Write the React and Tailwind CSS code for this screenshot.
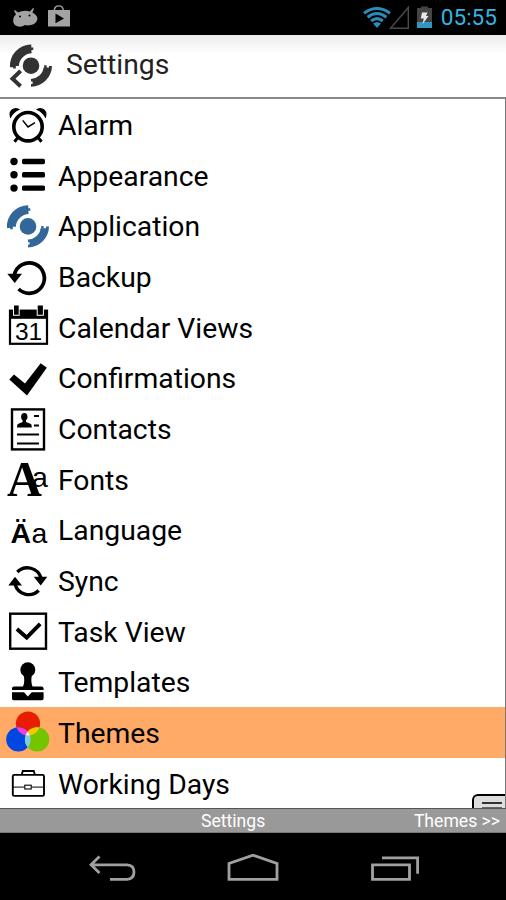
import { useState } from "react";

const Logo = ({ color }) => (
    <g fill={color}>
        <circle cx="28" cy="25.4" r="8.3" />
        <path d="M7 27 A21 21 0 0 1 28.3 4.3 V7.2 H30.3 V9.8 H28.5 V13 H30 A13.5 13.5 0 0 0 15.8 25.8 H12.8 V28.3 H10.2 V27 Z" />
        <path d="M49 25.6 A21 21 0 0 1 28 46.4 V43.6 H29.6 V41.2 H28 V38.6 A13 13 0 0 0 40.6 27.2 H41.2 V25 H43.6 V27.2 H46 V25.6 Z" />
    </g>
)

const icons = {
    alarm: (
        <g fill="none" stroke="#000">
            <path d="M10.6 17 C8.5 11 14 7 18.8 9.5 C15.5 11 12.5 13.5 10.6 17 Z M45.4 17 C47.5 11 42 7 37.2 9.5 C40.5 11 43.5 13.5 45.4 17 Z" fill="#000" strokeWidth="1.2" />
            <circle cx="28" cy="26.7" r="14.2" strokeWidth="3.6" />
            <path d="M22.7 20.4 L28 27 L35 22.6" strokeWidth="1.5" />
            <path d="M18 37.5 L14.5 41.8 M38 37.5 L41.5 41.8" strokeWidth="3" />
        </g>
    ),
    appearance: (
        <g>
            <circle cx="14" cy="11.5" r="3.7" />
            <circle cx="14" cy="24.8" r="3.7" />
            <circle cx="14" cy="38.1" r="3.7" />
            <rect x="22" y="8.8" width="23" height="5.4" rx="1.6" />
            <rect x="22" y="22.1" width="23" height="5.4" rx="1.6" />
            <rect x="22" y="35.4" width="23" height="5.4" rx="1.6" />
        </g>
    ),
    application: <Logo color="#336699" />,
    backup: (
        <g>
            <path d="M14.3 23 A15.2 15.2 0 1 1 18.6 37" fill="none" stroke="#000" strokeWidth="3.7" />
            <path d="M7.3 21.7 H22 L14.7 31 Z" />
        </g>
    ),
    calendar: (
        <g>
            <rect x="10" y="8.8" width="37" height="33" fill="#fff" stroke="#000" strokeWidth="2.2" />
            <rect x="9" y="7.8" width="39" height="9" />
            <path d="M13 7 H19.7 V13.8 H13 Z M36.7 7 H43.9 V13.8 H36.7 Z" fill="#fff" />
            <path d="M14 3.5 H18.7 V12.8 H14 Z M37.7 3.5 H42.9 V12.8 H37.7 Z" />
            <text x="15" y="38.5" fontSize="24.5" fontFamily="Liberation Sans, sans-serif">31</text>
        </g>
    ),
    check: <path d="M9.3 26.6 L14 21.6 L25 30.6 L40.7 10.2 L46.8 14.8 L27 42.4 Z" />,
    contacts: (
        <g>
            <rect x="12" y="5.4" width="32" height="40" fill="none" stroke="#000" strokeWidth="2.4" />
            <ellipse cx="24.3" cy="12.8" rx="3.2" ry="3.8" />
            <path d="M22.6 15 H26 V18 L31 20 Q31.8 21 31.8 23.4 H17 Q17 21 17.8 20 L22.6 18 Z" />
            <path d="M34 12 H39 M34 21.4 H39 M17 30.4 H39 M17 39.4 H39" stroke="#000" strokeWidth="2" />
        </g>
    ),
    fonts: (
        <g>
            <text x="7" y="42.1" fontSize="50" fontWeight="700" textLength="35" lengthAdjust="spacingAndGlyphs" fontFamily="Liberation Serif, serif">A</text>
            <text x="32" y="33" fontSize="28.5" fontFamily="Liberation Sans, sans-serif">a</text>
        </g>
    ),
    language: (
        <g fontFamily="Liberation Sans, sans-serif" fontSize="28.5">
            <text x="10.6" y="38.1" fontWeight="700">Ä</text>
            <text x="31.4" y="38.1">a</text>
        </g>
    ),
    sync: (
        <g>
            <path d="M17.3 16 A14.2 14.2 0 0 1 41 22 M15 28 A14.2 14.2 0 0 0 38.7 34.5" fill="none" stroke="#000" strokeWidth="3.3" />
            <path d="M33.7 20.8 H47.3 L40.7 29.5 Z M8.3 29.4 H22 L15 20.8 Z" />
        </g>
    ),
    task: (
        <g fill="none" stroke="#000">
            <rect x="10.2" y="7.7" width="35.8" height="35" strokeWidth="2.4" />
            <path d="M16.9 23 L26.7 31.5 L40.2 17.8" strokeWidth="3.9" />
        </g>
    ),
    stamp: (
        <g>
            <circle cx="27.8" cy="12.8" r="7.5" />
            <path d="M23.5 17 H32 Q30.5 25 32.5 29.5 H41.5 Q43.6 29.5 43.6 31.5 V33 H12 V31.5 Q12 29.5 14 29.5 H23 Q25.2 25 23.5 17 Z" />
            <path d="M12 35.2 H24 L27.8 39.4 L31.7 35.2 H43.6 V41.5 Q43.6 43.2 42 43.2 H13.6 Q12 43.2 12 41.5 Z" />
        </g>
    ),
    themes: (
        <g>
            <clipPath id="red"><circle cx="28" cy="16.5" r="12.1" /></clipPath>
            <clipPath id="blue"><circle cx="18.4" cy="32.4" r="12.2" /></clipPath>
            <circle cx="28" cy="16.5" r="12.1" fill="#e81c00" />
            <circle cx="18.4" cy="32.4" r="12.2" fill="#0046e0" />
            <circle cx="37.1" cy="32.4" r="12.2" fill="#74c400" />
            <circle cx="18.4" cy="32.4" r="12.2" fill="#f83cd8" clipPath="url(#red)" />
            <circle cx="37.1" cy="32.4" r="12.2" fill="#f6c800" clipPath="url(#red)" />
            <g clipPath="url(#blue)">
                <circle cx="37.1" cy="32.4" r="12.2" fill="#80cce4" />
                <circle cx="37.1" cy="32.4" r="12.2" fill="#ffe8f0" clipPath="url(#red)" />
            </g>
        </g>
    ),
    briefcase: (
        <g fill="none" stroke="#000">
            <rect x="12.8" y="16.9" width="31.2" height="21" rx="1.5" strokeWidth="1.9" />
            <path d="M21.8 16.5 L22.8 13 H33.8 L34.8 16.5" strokeWidth="1.9" />
            <path d="M12.8 29.1 H24.5 M31.5 29.1 H44" strokeWidth="1" />
            <rect x="24.8" y="27.2" width="6.4" height="3.8" strokeWidth="1.1" />
        </g>
    ),
}

const items = [
    { label: "Alarm", icon: "alarm" },
    { label: "Appearance", icon: "appearance" },
    { label: "Application", icon: "application" },
    { label: "Backup", icon: "backup" },
    { label: "Calendar Views", icon: "calendar" },
    { label: "Confirmations", icon: "check" },
    { label: "Contacts", icon: "contacts" },
    { label: "Fonts", icon: "fonts" },
    { label: "Language", icon: "language" },
    { label: "Sync", icon: "sync" },
    { label: "Task View", icon: "task" },
    { label: "Templates", icon: "stamp" },
    { label: "Themes", icon: "themes" },
    { label: "Working Days", icon: "briefcase" },
]

const StatusBar = () => (
    <div className="flex h-[35px] shrink-0 items-center justify-between bg-black pr-[9px] pl-3">
        <svg width="62" height="35" viewBox="12 0 62 35">
            <g fill="#a3a3a3">
                <path d="M15 10 L18 12.6 Q24 9.4 30 11.6 L33 8 L34 8.8 L32.4 12.4 Q37.6 15 37.4 19 Q36.5 24 31 25 Q27 25.8 25 25 Q21 27.8 16.5 26 Q12.8 24 13.2 20 Q13.2 16.5 16 14.2 L14 11 Z" />
                <path d="M48 10 H53.5 Q54 5.2 58.8 5.2 Q63.5 5.2 64 10 H70 V26.6 H48 Z M55 10 H62.7 Q62 6.6 58.8 6.6 Q55.7 6.6 55 10 Z" fillRule="evenodd" />
            </g>
            <circle cx="20" cy="16.5" r="1" />
            <circle cx="29.5" cy="15.5" r="1" />
            <path d="M55.5 13.5 L64 18.5 L55.5 23.3 Z" />
        </svg>
        <div className="flex items-center">
            <svg width="76" height="35" viewBox="362 0 76 35">
                <g fill="none" stroke="#2a8db8" strokeWidth="3">
                    <path d="M364 13.2 Q377 3.8 390 13.2" />
                    <path d="M367.6 17.2 Q377 9.8 386.4 17.2" />
                    <path d="M371.2 21 Q377 16.2 382.8 21" />
                </g>
                <path d="M373 23.5 Q377 20.5 381 23.5 L377 28 Z" fill="#2a8db8" />
                <path d="M408.3 7.5 V28.3 H390.5 Z" fill="none" stroke="#4a4a4a" strokeWidth="1.4" />
                <path d="M417 8 H421 V6.5 H428 V8 H432 V22 H417 Z" fill="#444" />
                <path d="M417 22 H432 V28 H417 Z" fill="#2f97c2" />
                <path d="M422 12.5 H427.5 L426 16 H428.5 L422.5 24.2 L423.8 18.6 H420.8 Z" fill="#e8e8e8" />
            </svg>
            <span className="ml-[3px] pt-0.5 text-[22.6px] leading-none text-[#33b5e5]">05:55</span>
        </div>
    </div>
)

const NavBar = () => (
    <div className="flex grow bg-black">
        <svg width="506" height="67" viewBox="0 833 506 67" fill="none" stroke="#a0a0a0" strokeWidth="2.8">
            <path d="M99.5 856.5 L91 864.8 L99.5 873 M91 864.8 H127 Q134 865 134 872 Q134 879 127 879.3 H110" />
            <path d="M229 879.3 V863.5 L253 855.2 L277 863.5 V879.3 Z" />
            <path d="M372.5 864.8 H409.5 V879.3 H372.5 Z M382 857.8 H417.6 V873.7" />
        </svg>
    </div>
)

const App = () => {
    const [selected, setSelected] = useState("Themes")

    return (
        <div className="flex h-[900px] w-[506px] flex-col overflow-hidden bg-white font-[Roboto,sans-serif] text-black">
            <StatusBar />
            <div className="flex h-[62px] shrink-0 items-center bg-linear-to-b from-[#ececec] via-white via-30% to-white">
                <svg width="66" height="62" viewBox="-3 -5.3 66 62">
                    <Logo color="#333" />
                    <path d="M17.6 30.5 L9.5 38.5 L17.6 46" fill="none" stroke="#333" strokeWidth="4" />
                </svg>
                <h1 className="pb-px text-[28.3px] leading-none text-[#222]">Settings</h1>
            </div>
            <div className="relative h-[711px] shrink-0 overflow-hidden border-t-2 border-r border-t-[#888] border-r-[#777] pt-[0.6px]">
                {
                    items.map((item) => (
                        <div
                            key={item.label}
                            className={`flex h-[50.66px] cursor-pointer items-center ${selected === item.label ? "bg-[#ffaa66]" : ""}`}
                            onClick={() => {
                                setSelected(item.label)
                            }}
                        >
                            <svg width="58" height="50.66" viewBox="0 0 58 50.66" className="shrink-0 overflow-visible">{icons[item.icon]}</svg>
                            <span className="pt-[2.5px] text-[28.3px] leading-none whitespace-nowrap">{item.label}</span>
                        </div>
                    ))
                }
                <div className="absolute -right-px bottom-0 flex h-[14px] w-[34px] flex-col items-center gap-[3px] rounded-tl-md border-t-2 border-l-2 border-black bg-[#ddd] pt-[6px] pl-1">
                    <div className="h-[1.5px] w-5 shrink-0 bg-[#333]" />
                    <div className="h-px w-5 shrink-0 bg-[#666]" />
                </div>
            </div>
            <div className="flex h-[25px] shrink-0 items-center justify-between border-t border-b border-t-[#555] border-b-[#777] bg-[#999] pt-0.5 pr-[6px] pl-[201px] text-[17.6px] leading-none text-white">
                <span>Settings</span>
                <span>Themes &gt;&gt;</span>
            </div>
            <NavBar />
        </div>
    )
}

export default App;
